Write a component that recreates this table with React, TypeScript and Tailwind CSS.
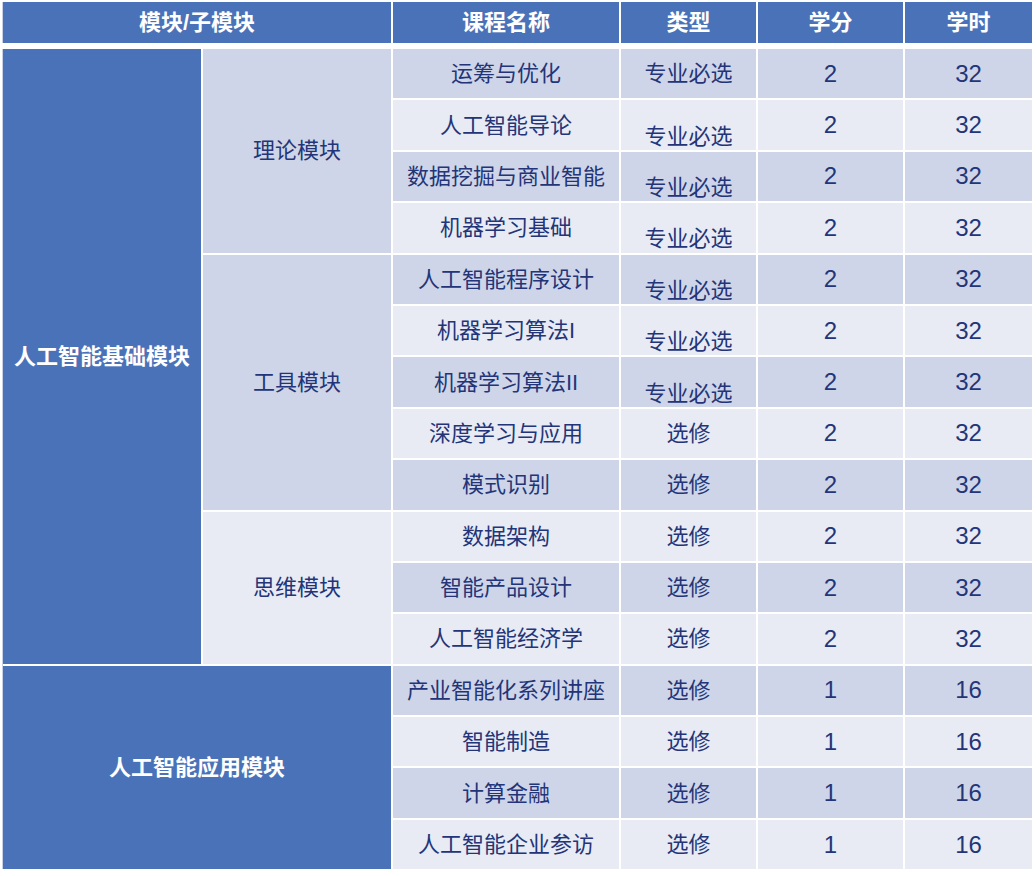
const FONT = { fontFamily: '"Liberation Sans", "Noto Sans CJK SC", sans-serif' };

type Course = { name: string; type: string; credit: number; hours: number; low?: boolean };

const courses: Course[] = [
  { name: "运筹与优化", type: "专业必选", credit: 2, hours: 32 },
  { name: "人工智能导论", type: "专业必选", credit: 2, hours: 32, low: true },
  { name: "数据挖掘与商业智能", type: "专业必选", credit: 2, hours: 32, low: true },
  { name: "机器学习基础", type: "专业必选", credit: 2, hours: 32, low: true },
  { name: "人工智能程序设计", type: "专业必选", credit: 2, hours: 32, low: true },
  { name: "机器学习算法I", type: "专业必选", credit: 2, hours: 32, low: true },
  { name: "机器学习算法II", type: "专业必选", credit: 2, hours: 32, low: true },
  { name: "深度学习与应用", type: "选修", credit: 2, hours: 32 },
  { name: "模式识别", type: "选修", credit: 2, hours: 32 },
  { name: "数据架构", type: "选修", credit: 2, hours: 32 },
  { name: "智能产品设计", type: "选修", credit: 2, hours: 32 },
  { name: "人工智能经济学", type: "选修", credit: 2, hours: 32 },
  { name: "产业智能化系列讲座", type: "选修", credit: 1, hours: 16 },
  { name: "智能制造", type: "选修", credit: 1, hours: 16 },
  { name: "计算金融", type: "选修", credit: 1, hours: 16 },
  { name: "人工智能企业参访", type: "选修", credit: 1, hours: 16 },
];

const headers = ["课程名称", "类型", "学分", "学时"];

export default function App() {
  return (
    <div className="w-[1036px] h-[876px] bg-white p-[2px] text-[#233578]" style={FONT}>
      <div className="grid grid-cols-[198px_188px_226px_135px_145px_127px] gap-x-[2px] border-l border-[#c9d1e6]">
        <div className="col-span-2 h-[41px] bg-[#4a72b9] text-white font-bold text-[22px] flex items-center justify-center">
          模块/子模块
        </div>
        {headers.map((h) => (
          <div key={h} className="h-[41px] bg-[#4a72b9] text-white font-bold text-[22px] flex items-center justify-center">
            {h}
          </div>
        ))}
      </div>
      <div className="mt-[6px] grid grid-cols-[198px_188px_226px_135px_145px_127px] grid-rows-[repeat(16,49.4px)] gap-[2px] border-l border-[#c9d1e6]">
        <div className="row-start-1 row-span-12 col-start-1 bg-[#4a72b9] text-white font-bold text-[22px] flex items-center justify-center">
          人工智能基础模块
        </div>
        <div className="row-start-1 row-span-4 col-start-2 bg-[#cfd5e8] text-[22px] flex items-center justify-center">
          理论模块
        </div>
        <div className="row-start-5 row-span-5 col-start-2 bg-[#cfd5e8] text-[22px] flex items-center justify-center">
          工具模块
        </div>
        <div className="row-start-10 row-span-3 col-start-2 bg-[#e8ebf4] text-[22px] flex items-center justify-center">
          思维模块
        </div>
        <div className="row-start-13 row-span-4 col-start-1 col-span-2 bg-[#4a72b9] text-white font-bold text-[22px] flex items-center justify-center">
          人工智能应用模块
        </div>
        {courses.map((c, i) => {
          const bg = i % 2 === 0 ? "bg-[#cfd5e8]" : "bg-[#e8ebf4]";
          return [
            <div key={c.name} className={`${bg} col-start-3 text-[22px] flex items-center justify-center`}>
              {c.name}
            </div>,
            <div key={c.name + "t"} className={`${bg} col-start-4 text-[22px] flex items-center justify-center`}>
              <span className={c.low ? "pt-[22px]" : ""}>{c.type}</span>
            </div>,
            <div key={c.name + "c"} className={`${bg} col-start-5 text-[24px] flex items-center justify-center`}>
              {c.credit}
            </div>,
            <div key={c.name + "h"} className={`${bg} col-start-6 text-[24px] flex items-center justify-center`}>
              {c.hours}
            </div>,
          ];
        })}
      </div>
    </div>
  );
}
